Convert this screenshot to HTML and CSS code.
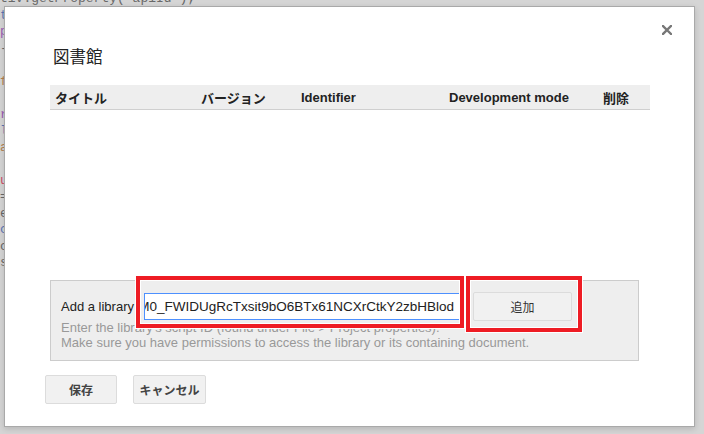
FILE: index.html
```html
<!DOCTYPE html>
<html lang="ja">
<head>
<meta charset="utf-8">
<link rel="stylesheet" href="styles.css">
</head>
<body>
<pre class="code"><span class="c-dark">tiv.getProperty('apiId');</span>
<span class="c-blue">t</span>
<span class="c-purple">p</span>
<span class="c-dark">-</span>

<span class="c-orange">f</span>

<span class="c-purple">r</span>
<span class="c-blue">l</span>
<span class="c-orange">a</span>

<span class="c-red">u</span>
<span class="c-dark">=</span>
<span class="c-dark">e</span>
<span class="c-blue">c</span>
<span class="c-dark">c</span>
<span class="c-dark">s</span>
</pre>
<div class="dialog">
  <button class="close" aria-label="閉じる"><svg width="10" height="10" viewBox="0 0 10 10"><path d="M1 1 L9 9 M9 1 L1 9" stroke="#777" stroke-width="2.4" stroke-linecap="square"/></svg></button>
  <div class="content">
    <h1 class="title">図書館</h1>
    <div class="table">
      <div class="thead">
        <span>タイトル</span>
        <span>バージョン</span>
        <span>Identifier</span>
        <span>Development mode</span>
        <span>削除</span>
      </div>
      <div class="tbody"></div>
    </div>
    <div class="panel">
      <div class="add-row">
        <label class="add-label">Add a library</label>
        <div class="input">
          <span class="input-text">M0_FWIDUgRcTxsit9bO6BTx61NCXrCtkY2zbHBlod</span><span class="caret"></span>
        </div>
        <button class="btn btn-add">追加</button>
      </div>
      <p class="help">Enter the library's script ID (found under File &gt; Project properties).<br>Make sure you have permissions to access the library or its containing document.</p>
    </div>
    <div class="actions">
      <button class="btn btn-foot">保存</button>
      <button class="btn btn-foot">キャンセル</button>
    </div>
  </div>
</div>
<div class="hl hl-input"></div>
<div class="hl hl-btn"></div>
</body>
</html>
```
FILE: styles.css
```css
html, body {
  margin: 0;
  padding: 0;
}
body {
  width: 704px;
  height: 434px;
  overflow: hidden;
  position: relative;
  background: #d5d5d5;
  font-family: "Liberation Sans", Arial, "Noto Sans CJK JP", sans-serif;
}
.code {
  position: absolute;
  left: 0;
  top: -9px;
  margin: 0;
  font-family: "Liberation Mono", monospace;
  font-size: 13px;
  line-height: 16.5px;
  color: #555;
  opacity: 0.75;
}
.c-dark { color: #444; }
.c-blue { color: #3355aa; }
.c-purple { color: #8833aa; }
.c-orange { color: #aa6622; }
.c-red { color: #cc2244; }

.dialog {
  position: absolute;
  left: 4px;
  top: 6px;
  width: 689px;
  height: 419px;
  background: #fff;
  border: 1px solid #a9a9a9;
  box-shadow: 0 2px 6px rgba(0,0,0,0.15);
}
.close {
  position: absolute;
  right: 22px;
  top: 18px;
  border: 0;
  background: none;
  padding: 0;
  width: 10px;
  height: 10px;
  line-height: 0;
}
.content {
  padding: 38px 0 0 45px;
}
.title {
  margin: 0 0 18px 3px;
  font-family: "Noto Sans CJK JP", sans-serif;
  font-weight: normal;
  font-size: 16.5px;
  line-height: 22px;
  color: #222;
}
.table {
  width: 600px;
}
.thead {
  display: grid;
  grid-template-columns: 146px 100px 148px 154px 1fr;
  padding-left: 5px;
  height: 24px;
  align-items: center;
  background: #eeeeee;
  border-bottom: 1px solid #cfcfcf;
  font-size: 13px;
  font-weight: bold;
  color: #222;
}
.tbody {
  height: 170px;
}
.panel {
  width: 587px;
  height: 79px;
  background: #eeeeee;
  border: 1px solid #cccccc;
}
.add-row {
  display: flex;
  align-items: center;
  padding: 11px 0 0 10px;
  height: 29px;
}
.add-label {
  font-size: 13px;
  color: #222;
  width: 83px;
}
.input {
  width: 309px;
  height: 25px;
  border: 1px solid #4d90fe;
  background: #fff;
  display: flex;
  justify-content: flex-end;
  align-items: center;
  overflow: hidden;
  padding-right: 7px;
  white-space: nowrap;
}
.input-text {
  font-size: 13.5px;
  color: #222;
}
.caret {
  display: inline-block;
  width: 1px;
  height: 17px;
  background: #000;
}
.btn {
  font-family: "Liberation Sans", Arial, "Noto Sans CJK JP", sans-serif;
  background: #f1f1f1;
  border: 1px solid #dcdcdc;
  border-radius: 2px;
  color: #444;
  font-size: 12px;
  font-weight: bold;
  padding: 0;
}
.btn-add {
  margin-left: 11px;
  width: 99px;
  height: 29px;
  font-weight: normal;
  color: #333;
}
.help {
  margin: -1px 0 0 10px;
  font-size: 13px;
  line-height: 15px;
  color: #999;
}
.actions {
  display: flex;
  gap: 16px;
  margin: 14px 0 0 -5px;
}
.btn-foot {
  width: 72px;
  height: 29px;
}
.btn-foot + .btn-foot {
  width: 73px;
}
.hl {
  position: absolute;
  border: 4px solid #ee1c24;
  box-shadow: 0 0 0 1px #fff, inset 0 0 0 1px #fff;
}
.hl-input {
  left: 136px;
  top: 276px;
  width: 320px;
  height: 44px;
}
.hl-btn {
  left: 466px;
  top: 276px;
  width: 108px;
  height: 48px;
}
```
